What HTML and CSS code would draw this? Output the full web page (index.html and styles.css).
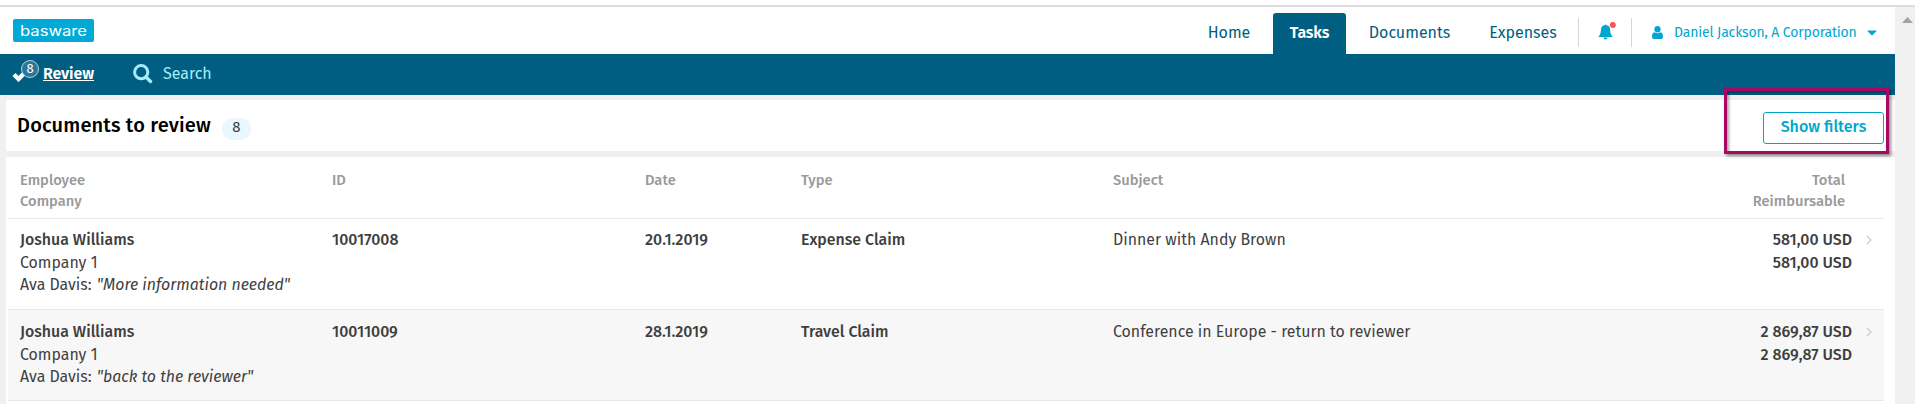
FILE: index.html
```html
<!DOCTYPE html>
<html lang="en">
<head>
    <meta charset="UTF-8">
    <meta name="viewport" content="width=device-width, initial-scale=1.0">
    <title>Documents to review</title>
    <link rel="stylesheet" href="styles.css">
</head>
<body>
    <div class="window">
        <div class="page">
            <!-- Top bar with logo and main navigation -->
            <header class="topbar">
                <svg class="logo" width="81" height="23" viewBox="0 0 81 23">
                    <rect width="81" height="23" rx="2" fill="#00a9d6"/>
                    <text x="7" y="17" textLength="67" lengthAdjust="spacingAndGlyphs">basware</text>
                </svg>
                <nav class="tabs">
                    <a class="tab home">Home</a>
                    <a class="tab tasks active">Tasks</a>
                    <a class="tab documents">Documents</a>
                    <a class="tab expenses">Expenses</a>
                </nav>
                <div class="bell">
                    <svg width="20" height="20" viewBox="0 0 20 20">
                        <path d="M7.5 3.2a1.2 1.2 0 0 1 2.1 0c2.400.5 3.600 2.200 3.600 4.700 0 3 .8 4.600 2.300 6.600v.5H1.600v-.5C3.100 12.500 3.900 10.900 3.900 7.900c0-2.500 1.200-4.200 3.600-4.700zM6.600 15.500h3.900a1.950 1.950 0 0 1-3.900 0z" fill="#00a6cf"/>
                        <circle cx="15.800" cy="3" r="3" fill="#ff5257"/>
                    </svg>
                </div>
                <div class="user">
                    <svg class="person" width="11" height="13" viewBox="0 0 11 13">
                        <ellipse cx="5.500" cy="3.300" rx="3.100" ry="3.300" fill="#00a6cf"/>
                        <path d="M2.600 6.200c1.700 1.500 4.100 1.500 5.800 0C10.300 6.500 11 8.200 11 10.400 11 12 10.200 13 9 13H2C.8 13 0 12 0 10.400 0 8.200.7 6.500 2.600 6.200z" fill="#00a6cf"/>
                    </svg>
                    <span class="user-name">Daniel Jackson, A Corporation</span>
                    <svg class="caret" width="10" height="6" viewBox="0 0 10 6"><path d="M1 .5h8q1 0 .3.800L5.600 5q-.6.500-1.200 0L.7 1.300Q0 .5 1 .5z" fill="#00a6cf"/></svg>
                </div>
            </header>

            <!-- Sub navigation -->
            <div class="subnav">
                <a class="review">
                    <svg class="check" width="16" height="13" viewBox="0 0 16 13"><path d="M2 5.500l4.500 4.500L14 2.500" fill="none" stroke="#fff" stroke-width="4.400"/></svg>
                    <span class="count">8</span>
                    <span class="review-label">Review</span>
                </a>
                <a class="search">
                    <svg width="20" height="20" viewBox="0 0 20 20">
                        <circle cx="8.200" cy="8.200" r="6.600" fill="none" stroke="#a5ecfb" stroke-width="3"/>
                        <path d="M13 13l4.500 4.500" stroke="#a5ecfb" stroke-width="3.400" stroke-linecap="round"/>
                    </svg>
                    <span class="search-label">Search</span>
                </a>
            </div>

            <main class="content">
                <section class="title-bar">
                    <h1>Documents to review</h1>
                    <span class="badge">8</span>
                    <button class="filters">Show filters</button>
                </section>

                <!-- List of documents -->
                <section class="list">
                    <div class="row head">
                        <div>Employee<br>Company</div>
                        <div>ID</div>
                        <div>Date</div>
                        <div>Type</div>
                        <div>Subject</div>
                        <div class="amount">Total<br>Reimbursable</div>
                    </div>
                    <div class="row">
                        <div><b>Joshua Williams</b><br>Company 1<br>Ava Davis: <i>"More information needed"</i></div>
                        <div><b>10017008</b></div>
                        <div><b>20.1.2019</b></div>
                        <div><b>Expense Claim</b></div>
                        <div>Dinner with Andy Brown</div>
                        <div class="amount"><b>581,00 USD</b><br><b>581,00 USD</b></div>
                        <svg class="arrow" width="6" height="10" viewBox="0 0 6 10"><path d="M1 1l4 4-4 4" fill="none" stroke="#ccc" stroke-width="1.300"/></svg>
                    </div>
                    <div class="row even">
                        <div><b>Joshua Williams</b><br>Company 1<br>Ava Davis: <i>"back to the reviewer"</i></div>
                        <div><b>10011009</b></div>
                        <div><b>28.1.2019</b></div>
                        <div><b>Travel Claim</b></div>
                        <div>Conference in Europe - return to reviewer</div>
                        <div class="amount"><b>2 869,87 USD</b><br><b>2 869,87 USD</b></div>
                        <svg class="arrow" width="6" height="10" viewBox="0 0 6 10"><path d="M1 1l4 4-4 4" fill="none" stroke="#ccc" stroke-width="1.300"/></svg>
                    </div>
                </section>
            </main>
        </div>
        <div class="scrollbar">
            <svg width="11" height="6" viewBox="0 0 11 6"><path d="M0 6L5.500 0 11 6z" fill="#a3a3a3"/></svg>
        </div>
    </div>
    <!-- Highlight around the filter button -->
    <div class="highlight"></div>
</body>
</html>
```
FILE: styles.css
```css
* {
    box-sizing: border-box;
}

body {
    margin: 0;
    height: 404px;
    padding-top: 5px;
    overflow: hidden;
    background-color: #fff;
    color: #3f3f3f;
    font-family: "Fira Sans", "Noto Sans", sans-serif;
    font-size: 16px;
    white-space: nowrap;
}

/* Window with a scrollbar on the right */
.window {
    display: flex;
    height: 399px;
    border-top: 2px solid #dcdcdc;
}
.page {
    width: 1895px;
    background-color: #f0f0f0;
}
.scrollbar {
    width: 20px;
    padding: 10px 0 0 7px;
    background-color: #f0f0f0;
}
.scrollbar svg {
    display: block;
}

/* Top bar */
.topbar {
    display: flex;
    height: 47px;
    padding-left: 13px;
    background-color: #fff;
}
.logo {
    margin-top: 12px;
}
.logo text {
    font-family: "Inter", sans-serif;
    font-size: 14px;
    font-weight: 400;
    fill: #fff;
}
.tabs {
    display: flex;
    gap: 7px;
    margin: 6px 5px 0 auto;
}
.tab {
    height: 41px;
    line-height: 40px;
    text-align: center;
    border-radius: 3px 3px 0 0;
    color: #005e82;
}
.home {
    width: 74px;
}
.tasks {
    width: 73px;
}
.documents {
    width: 113px;
}
.expenses {
    width: 100px;
}
.active {
    background-color: #005e82;
    color: #fff;
    font-weight: 600;
    letter-spacing: -0.2px;
}
.bell {
    width: 54px;
    height: 29px;
    margin-top: 11px;
    padding: 4px 0 0 18px;
    border-left: 1px solid #d5d5d5;
    border-right: 1px solid #d5d5d5;
}
.user {
    display: flex;
    align-items: center;
    width: 263px;
    height: 39px;
    margin-top: 6px;
    padding-left: 20px;
    color: #00a6cf;
    font-size: 14px;
}
.user-name {
    width: 181px;
    margin: 0 12px 0 11px;
    letter-spacing: -0.15px;
}

/* Sub navigation */
.subnav {
    display: flex;
    height: 41px;
    background-color: #005e82;
    line-height: 40px;
}
.review {
    position: relative;
    display: flex;
    width: 133px;
    padding-left: 12px;
    color: #fff;
    font-weight: 600;
}
.check {
    margin-top: 15px;
}
.review-label {
    margin-left: 15px;
    letter-spacing: -0.1px;
    text-decoration: underline;
}
.count {
    position: absolute;
    left: 21px;
    top: 6px;
    width: 18px;
    height: 18px;
    border: 1px solid #b8d2dd;
    border-radius: 50%;
    background-color: #2d7896;
    font-size: 13px;
    font-weight: normal;
    line-height: 15px;
    text-align: center;
}
.search {
    display: flex;
    color: #a5ecfb;
}
.search svg {
    margin-top: 10px;
}
.search-label {
    margin-left: 10px;
}

/* Title bar */
.content {
    padding: 5px 0 0 6px;
}
.title-bar {
    display: flex;
    height: 51px;
    padding: 12px 11px 0;
    background-color: #fff;
}
h1 {
    width: 194px;
    margin: 0;
    color: #000;
    font-size: 20px;
    font-weight: 500;
    line-height: 26px;
    letter-spacing: 0.17px;
}
.badge {
    width: 29px;
    height: 22px;
    margin: 6px 0 0 11px;
    border-radius: 11px;
    background-color: #e8f8fe;
    font-size: 15px;
    line-height: 19px;
    text-align: center;
}
.filters {
    width: 121px;
    height: 32px;
    margin-left: auto;
    padding: 0 0 3px;
    border: 1px solid #00a6cf;
    border-radius: 3px;
    background-color: #fff;
    color: #00a6cf;
    font-family: inherit;
    font-size: 16px;
    font-weight: 500;
}

/* Document list */
.list {
    height: 247px;
    margin-top: 6px;
    padding: 0 11px 0 2px;
    background-color: #fff;
}
.row {
    display: grid;
    grid-template-columns: 312px 313px 156px 312px 439px 300px 32px;
    height: 91px;
    padding: 10px 0 0 12px;
    border-bottom: 1px solid #e8e8e8;
    font-size: 15.9px;
    line-height: 22.5px;
}
.even {
    padding-top: 11px;
    background-color: #f7f7f7;
}
.head {
    height: 62px;
    padding-top: 13px;
    color: #999;
    font-size: 14.7px;
    font-weight: 500;
    line-height: 21px;
}
.row b {
    font-weight: 500;
}
.row i {
    margin-left: 1px;
}
.amount {
    text-align: right;
}
.head .amount {
    padding-right: 7px;
}
.arrow {
    margin: 6px 0 0 14px;
}

/* Highlight frame */
.highlight {
    position: absolute;
    left: 1724px;
    top: 88px;
    width: 165px;
    height: 66px;
    border: 3px solid #a80863;
    box-shadow: 2px 2px 3px rgba(0, 0, 0, 0.45), inset 2px 2px 3px rgba(0, 0, 0, 0.35);
}
```
